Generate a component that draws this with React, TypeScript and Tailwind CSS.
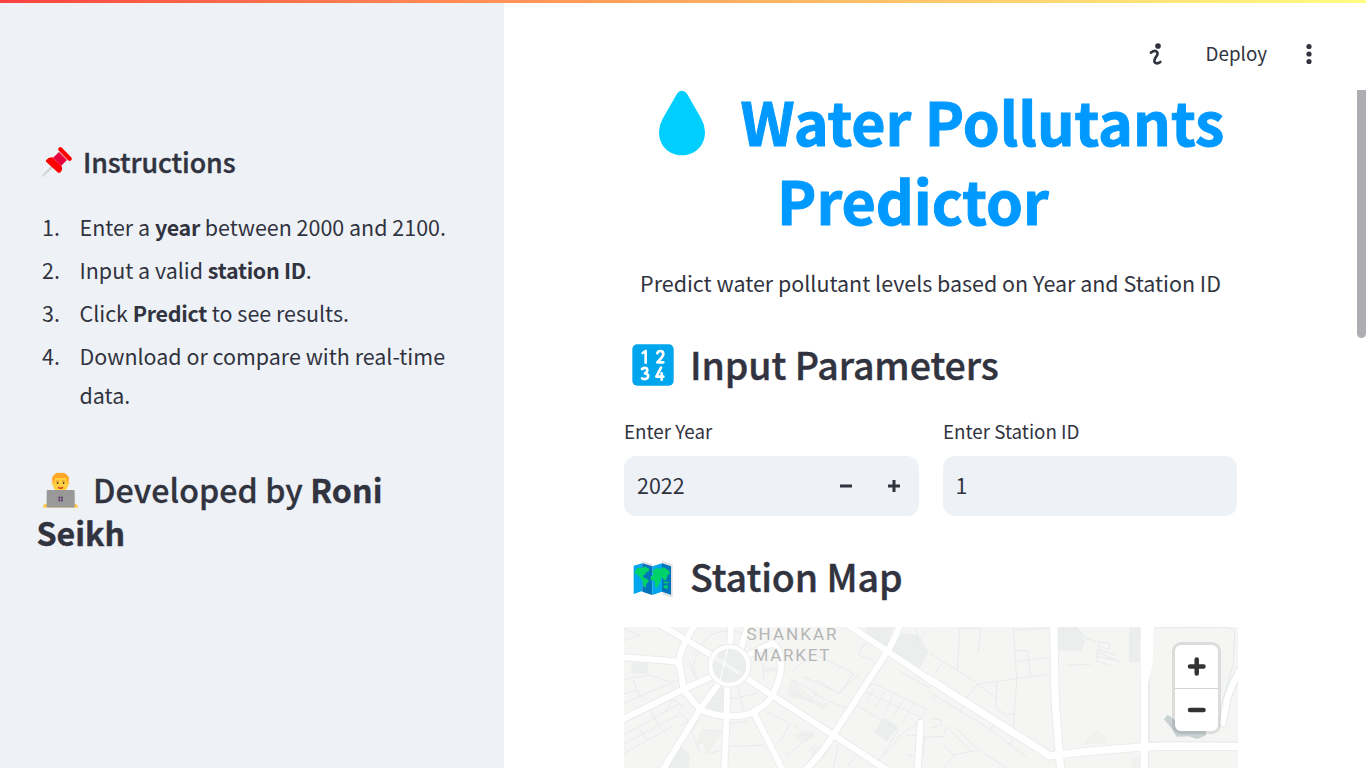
import React from 'react';

const PinIcon = () => (
  <svg className="h-[32px] w-[32px] shrink-0" viewBox="0 0 96 96">
    <path d="M2 90 L32 58 L38 64 L8 91 Q2 94 2 90Z" fill="#d2d2d2" />
    <path d="M36 35 L54 18 L78 42 L60 60Z" fill="#e6003d" />
    <path d="M58 10 L86 38" stroke="#fd0000" strokeWidth="13" strokeLinecap="round" />
    <path d="M15 43 Q22 33 34 34 L63 62 Q65 73 57 80 Q52 82 48 77 L17 49 Q13 46 15 43Z" fill="#fd0000" />
  </svg>
);

const DeveloperIcon = () => (
  <svg className="h-[36px] w-[36px] shrink-0" viewBox="0 0 36 36">
    <path d="M1 35.5 v-1 q1-3 4-3 h26 q4 0 5 3 v1Z" fill="#ffc83d" />
    <path d="M14 17h9v4h-9z" fill="#f5b52c" />
    <path d="M11 5h15v8q0 6-7.5 6T11 13Z" fill="#ffcf3f" />
    <path d="M10.5 10 Q9 5 12 3 Q14 0 18 1 Q23 0 25 3 Q28 5 26.5 10 L25 11 24.5 6 H13L12 11Z" fill="#ffa726" />
    <circle cx="10.8" cy="11.3" r="1.3" fill="#ffc83d" />
    <circle cx="26.2" cy="11.3" r="1.3" fill="#ffc83d" />
    <path d="M14 9.2l3-.4M20 8.8l3 .4" stroke="#e8912d" strokeWidth="1" />
    <circle cx="15.6" cy="11" r=".9" fill="#463b3b" />
    <circle cx="21.6" cy="11" r=".9" fill="#463b3b" />
    <path d="M16 15.4q2.600 1.6 5.200 0" stroke="#dd3b2f" strokeWidth="1.400" fill="none" />
    <path d="M4.700 19q0-1 1-1h26q1 0 1 1v16.500h-28z" fill="#999" />
    <g fill="#5c3a6e">
      <circle cx="17.300" cy="25.700" r="1.100" />
      <circle cx="19.900" cy="25.700" r="1.100" />
      <circle cx="17.300" cy="28.300" r="1.100" />
      <circle cx="19.900" cy="28.300" r="1.100" />
    </g>
  </svg>
);

const DropIcon = () => (
  <svg className="mt-[4px] h-[66px] w-[48px] shrink-0" viewBox="0 0 144 198">
    <path d="M57 11 Q62 2 71 2 Q81 2 87 11 L130 86 Q141 106 141 126 C141 167 111 196 72 196 C33 196 3 167 3 126 Q3 106 14 86Z" fill="#00ceff" />
  </svg>
);

const NumbersIcon = () => (
  <svg className="h-[42px] w-[42px] shrink-0" viewBox="0 0 126 126">
    <rect x="1" y="1" width="124" height="124" rx="15" fill="#00a6ed" />
    <g fill="none" stroke="#fff" strokeWidth="8" strokeLinecap="round" strokeLinejoin="round">
      <path d="M32 27 L41 21 V56" />
      <path d="M76 28 Q78 21 85 21 Q94 21 94 30 Q94 37 76 55 H94" />
      <path d="M30 75 Q38 70 44 73 Q50 81 39 88 Q51 90 48 100 Q42 109 30 103" />
      <path d="M87 71 L73 98 H94 M89 88 V107" />
    </g>
  </svg>
);

const MapIcon = () => (
  <svg className="mt-[1px] h-[38px] w-[40px] shrink-0" viewBox="0 0 120 114">
    <path d="M28 3 L58 12 V105 L28 96Z M88 3 L119 12 V113 L88 104Z" fill="#e2e2e4" />
    <path d="M2 17 L28 10 V93 L2 102Z" fill="#00a6ed" />
    <path d="M28 10 L58 19 V105 L28 95Z" fill="#0074ba" />
    <path d="M58 19 L87 10 V95 L58 105Z" fill="#00a6ed" />
    <path d="M87 10 L114 19 V104 L87 95Z" fill="#0074ba" />
    <path d="M6 34 L13 24 28 23 38 20 49 27 47 34 38 38 36 45 30 44 31 52 43 57 48 63 40 72 37 85 31 78 28 62 20 52 12 42 5 42Z" fill="#00d26a" />
    <path d="M58 32 L70 25 81 27 91 22 107 31 111 42 105 43 102 55 95 62 85 50 83 62 72 84 66 80 66 64 53 60 54 48 62 44Z" fill="#00d26a" />
    <path d="M92 65h14v5H92zM92 77l12-3v13l-12-4z" fill="#00d26a" />
  </svg>
);

const ROADS_WEST = [
  'M120 14 L275 105',
  'M0 111 L165 124 Q180 128 182 150 L190 208 L240 268 Q280 287 325 289 Q385 288 400 275 Q445 255 460 220 Q487 170 482 120 Q478 80 456 70 L385 105',
  'M178 130 Q176 90 225 15',
  'M334 10 L330 80',
  'M384 14 L362 88',
  'M0 302 L190 208 L275 170',
  'M300 185 L240 268 L128 450',
  'M322 195 L320 290 L313 450',
  'M400 275 L488 450',
  'M375 172 L455 225 L640 345 L805 452',
  'M842 10 Q822 65 800 97 L640 345 Q600 410 560 445',
  'M680 12 L800 92 L935 184',
  'M902 308 L893 450',
];

const ROADS_EAST = [
  'M-8 174 L360 408 Q500 388 700 378 L930 379',
  'M371 10 L376 250 L392 450',
  'M650 10 L643 180 L643 450',
];

const LANES_WEST =
  'M12 62 L60 45 L12 25 M12 178 L90 165 L148 185 L182 180 M40 180 L60 235 M12 222 L50 210 L80 240 M12 250 L150 190 L172 220 M12 345 L180 250 M12 372 L175 285 M12 400 L160 318 M80 250 L120 320 M140 270 L158 238 L190 258 L175 275 L205 302 L180 320 M60 330 L80 360 M105 295 L125 330 M210 125 Q215 170 245 193 M220 105 L270 45 Q330 20 375 45 M240 90 Q205 140 232 175 M265 230 Q290 240 350 235 L410 220 L425 190 M390 85 Q440 110 430 180 M350 190 L365 240 L370 270 M415 120 L470 115 M430 145h48 M430 152h48 M520 150 L580 100 L700 160 L660 220 L550 170 M590 180 L655 220 L720 160 M510 175 L590 220 L570 245 L500 210 M580 220 L640 250 L690 270 M235 300 L215 335 L240 400 M245 330 L310 334 L308 390 L270 400 M330 310 L385 305 M330 380 L430 375 M440 275 L510 310 L480 365 M520 310 L550 345 L580 345 L500 405 M590 370 L565 395 M655 375 L640 444 M715 402 L680 440 M730 70 L715 105 L760 120 M725 85 L755 50 M880 75 L930 25 M890 60 L890 22 M842 155 L930 205 M710 232 L760 190 L920 268 L890 308 M735 188 L715 210 M765 200 L740 245 M795 215 L765 265 M820 225 L795 280 M850 242 L820 290 M880 252 L850 305 M735 215 L900 290 M830 355 L890 310 M700 250 L835 330 L765 440 M860 345 L930 352 M915 350 L910 410 L860 405 M790 410 L830 360';

const LANES_EAST =
  'M0 100 L40 125 L135 185 L200 235 M90 20 L82 150 M82 25 L152 25 L145 95 M250 20 L260 180 L250 330 M250 30 L358 24 M255 125 L355 112 M255 92 L292 92 L302 170 M145 192 L358 162 M145 192 L108 235 M40 125 L15 158 M200 185 L198 265 L230 285 L252 282 M110 238 L90 275 M0 218 L180 328 L290 412 M190 315 L175 335 M240 375 L255 350 M0 230h10M10 240l8-8M28 250l8-8M0 295 L32 300 L35 315 L0 325 M0 350 L40 350 L50 320 L125 395 M35 370 L70 405 L148 390 L230 444 M85 330 L140 385 M40 444 L75 405 M408 136 L485 132 M440 25 L470 55 L508 68 L498 122 L545 137 M508 65 L540 70 L538 88 L508 80 M505 90 L560 105 M503 98 L568 125 M500 110 L560 120 M430 20 L470 60';

const StationMap = () => (
  <svg className="block h-[141px] w-[614px] overflow-visible" viewBox="0 0 614 141">
    <clipPath id="frame"><rect width="614" height="141" /></clipPath>
    <g clipPath="url(#frame)">
      <rect width="614" height="141" fill="#f5f5f4" />
      <g transform="translate(-4 -7) scale(.3333)">
        <path d="M35 128 L85 130 L85 160 L35 160Z M740 20 L820 20 L800 85 L735 45Z M840 40 L895 45 L925 95 L900 145 L815 95Z M790 292 L835 320 L800 365 L763 335Z M290 200 L315 205 L313 278 L258 265Z M175 375 L210 405 L205 444 L140 444Z" fill="#eceeee" />
        <path d="M505 190 L525 175 L545 205 L590 245 L630 250 L610 270 L560 240 L505 230Z M570 390 L620 370 L620 410 L580 415Z M240 335 L310 335 L260 405 L250 370 L225 380Z M520 345 L570 330 L590 350 L540 370Z" fill="#f0f0ef" />
        <path d={LANES_WEST} fill="none" stroke="#e6ebeb" strokeWidth="3" />
      </g>
      <g transform="translate(306 -7) scale(.3333)">
        <path d="M385 20 L440 20 L465 65 L455 92 L385 92Z M597 20 H632 V126 H597Z" fill="#eceeee" />
        <path d="M465 360 L500 330 L527 352 L525 372 L465 372Z M605 415h28v25h-28z" fill="#f0f0ef" />
        <path d={LANES_EAST} fill="none" stroke="#e5ebea" strokeWidth="3" />
        <path d="M671 30 Q672 23 682 23 L885 22 Q915 24 914 38 L910 130 L880 235 L868 312 Q876 324 888 315 L897 240 L928 155 V366 L658 366 V185Z" fill="#f5f5f4" stroke="#e3eae9" strokeWidth="3" />
      </g>
      {[
        { shift: 'translate(-4 -7) scale(.3333)', roads: ROADS_WEST, width: 18 },
        { shift: 'translate(306 -7) scale(.3333)', roads: ROADS_EAST, width: 22 },
      ].map(({ shift, roads, width }) => (
        <g key={shift} transform={shift} fill="none" strokeLinecap="round" strokeLinejoin="round">
          {roads.map((d) => <path key={d} d={d} stroke="#e6eceb" strokeWidth={width + 5} />)}
        </g>
      ))}
      {[
        { shift: 'translate(-4 -7) scale(.3333)', roads: ROADS_WEST, width: 18 },
        { shift: 'translate(306 -7) scale(.3333)', roads: ROADS_EAST, width: 22 },
      ].map(({ shift, roads, width }) => (
        <g key={shift} transform={shift} fill="none" stroke="#fff" strokeWidth={width} strokeLinecap="round" strokeLinejoin="round">
          {roads.map((d) => <path key={d} d={d} />)}
        </g>
      ))}
      <g transform="translate(-4 -7) scale(.3333)">
        <circle cx="328" cy="137" r="57" fill="#eceeee" stroke="#e6eceb" strokeWidth="17" />
        <circle cx="328" cy="137" r="57" fill="#eceeee" stroke="#fff" strokeWidth="12" />
        <path d="M280 107 L362 158 M278 113 L357 162 M324 85 L300 180" stroke="#fff" strokeWidth="3" />
      </g>
      <g transform="translate(306 -7) scale(.3333)">
        <path d="M633 20 H672 L668 130 L656 185 L632 180Z" fill="#fff" />
        <path d="M940 130 Q895 215 890 245 L878 310" fill="none" stroke="#e3eae9" strokeWidth="25" strokeLinecap="round" />
        <path d="M940 130 Q895 215 890 245 L878 310" fill="none" stroke="#fff" strokeWidth="19" strokeLinecap="round" />
        <path d="M702 298 L713 284 L735 300 L745 330 H828 V346 L802 357 L775 349 L740 350 L722 322Z" fill="#c8d1d2" />
      </g>
    </g>
    <g fill="#b5b5b5" stroke="#f5f5f4" strokeWidth="2" paintOrder="stroke" textAnchor="middle" fontFamily="'DIN Pro','Roboto',sans-serif" fontSize="17">
      <text x="167.500" y="13" textLength="90">SHANKAR</text>
      <text x="167.500" y="34.200" textLength="76">MARKET</text>
    </g>
  </svg>
);

const Strong = ({ children }: { children: React.ReactNode }) => (
  <strong className="font-bold tracking-[-0.3px]">{children}</strong>
);

const steps: React.ReactNode[] = [
  <>Enter a <Strong>year</Strong> between 2000 and 2100.</>,
  <>Input a valid <Strong>station ID</Strong>.</>,
  <>Click <Strong>Predict</Strong> to see results.</>,
  <>Download or compare with real-time data.</>,
];

export default function App() {
  return (
    <div className="relative flex h-[768px] w-[1366px] overflow-hidden bg-white font-['Noto_Sans_CJK_SC',sans-serif] text-[#31333f]">
      <div className="absolute inset-x-0 top-0 z-10 h-[3px] bg-linear-to-r from-[#ff4040] to-[#fffd80]" />

      <aside className="w-[504px] shrink-0 bg-[#eef2f7] pt-[144px]">
        <h3 className="flex h-[36px] items-center gap-[10px] pl-[41px] text-[26.8px] leading-[36px] font-medium tracking-[-0.08px] [-webkit-text-stroke:0.4px_#31333f]">
          <PinIcon />
          <span>Instructions</span>
        </h3>
        <ol className="mt-[27px] flex flex-col gap-[4px] text-[21.46px] leading-[39px]">
          {steps.map((step, i) => (
            <li key={i} className="flex pl-[42px]">
              <span className="w-[37.500px] shrink-0">{i + 1}.</span>
              <span className="w-[380px]">{step}</span>
            </li>
          ))}
        </ol>
        <h2 className="mt-[54px] pl-[36.500px] text-[32.2px] leading-[43px] font-medium">
          <span className="flex items-center">
            <span className="mr-[15px] ml-[5.500px]"><DeveloperIcon /></span>
            <span className="tracking-[0.05px] [-webkit-text-stroke:0.3px_#31333f]">Developed by <b className="font-bold">Roni</b></span>
          </span>
          <b className="font-bold [-webkit-text-stroke:0.4px_#31333f]">Seikh</b>
        </h2>
      </aside>

      <main className="flex min-w-0 flex-1 flex-col">
        <header className="flex h-[81px] shrink-0 items-center justify-end pt-[26px] pr-[52px] text-[18.8px]">
          <svg className="mr-[43px] h-[24px] w-[14px]" viewBox="0 0 42 72">
            <circle cx="27" cy="12" r="8.500" fill="#31333f" />
            <path d="M6 32 Q18 23 24 30 Q29 35 20 46 Q12 59 20 63 Q26 66 34 60" fill="none" stroke="#31333f" strokeWidth="8" strokeLinecap="round" />
          </svg>
          <span>Deploy</span>
          <svg className="ml-[37px] h-[24px] w-[10px]" viewBox="0 0 10 24" fill="#31333f">
            <circle cx="5" cy="4.500" r="2.600" />
            <circle cx="5" cy="12" r="2.600" />
            <circle cx="5" cy="19.500" r="2.600" />
          </svg>
        </header>

        <div className="ml-[120px] w-[614px]">
          <h1 className="text-[59.1px] leading-[79px] font-bold text-[#0099ff] [-webkit-text-stroke:1px_#0099ff]">
            <span className="flex h-[79px] items-center pl-[34px]">
              <DropIcon />
              <span className="ml-[34.500px] whitespace-nowrap">Water Pollutants</span>
            </span>
            <span className="block pl-[153px]">Predictor</span>
          </h1>
          <p className="mt-[24px] -ml-px text-center text-[21.46px] leading-[39px] whitespace-nowrap">
            Predict water pollutant levels based on Year and Station ID
          </p>
          <h2 className="mt-[38px] flex h-[50px] items-center gap-[16px] pl-[8px] text-[37.5px] leading-[50px] font-medium tracking-[-0.08px] [-webkit-text-stroke:0.4px_#31333f]">
            <NumbersIcon />
            <span className="-mt-[2px]">Input Parameters</span>
          </h2>

          <div className="mt-[25px] flex gap-[24px]">
            <div className="w-[295px]">
              <label className="block h-[41px] text-[18.8px] leading-[32px]">Enter Year</label>
              <div className="flex h-[60px] items-center rounded-[12px] bg-[#eef2f7] pl-[13px] text-[21.46px]">
                <span className="flex-1 pb-[2px]">2022</span>
                <svg className="h-[14px] w-[96px]" viewBox="0 0 96 14">
                  <path d="M17 7h12M65 7h12M71 1v12" stroke="#31333f" strokeWidth="3" />
                </svg>
              </div>
            </div>
            <div className="w-[294px]">
              <label className="block h-[41px] text-[18.8px] leading-[32px]">Enter Station ID</label>
              <div className="flex h-[60px] items-center rounded-[12px] bg-[#eef2f7] pb-[2px] pl-[12.500px] text-[21.46px]">1</div>
            </div>
          </div>

          <h2 className="mt-[37px] flex h-[50px] items-center gap-[17px] pl-[9px] text-[37.5px] leading-[50px] font-medium tracking-[-0.08px] [-webkit-text-stroke:0.4px_#31333f]">
            <MapIcon />
            <span className="-mt-[4px]">Station Map</span>
          </h2>
          <div className="relative mt-[24px]">
            <StationMap />
            <div className="absolute top-[15px] right-[17px] flex h-[92px] w-[49px] flex-col rounded-[9px] border-[3px] border-black/10 bg-white bg-clip-padding">
              <div className="flex flex-1 items-center justify-center border-b border-[#d2d2d2]">
                <svg className="h-[20px] w-[20px]" viewBox="0 0 20 20">
                  <path d="M3 10.500h13.500M9.700 3.500v14" stroke="#333" strokeWidth="4.500" strokeLinecap="round" />
                </svg>
              </div>
              <div className="flex flex-1 items-center justify-center">
                <svg className="h-[20px] w-[20px]" viewBox="0 0 20 20">
                  <path d="M3 10h13.500" stroke="#333" strokeWidth="4.500" strokeLinecap="round" />
                </svg>
              </div>
            </div>
          </div>
        </div>
      </main>
      <div className="absolute top-[90px] right-0 h-[248px] w-[9px] rounded-b-[5px] bg-[#adadb2]" />
    </div>
  );
}
